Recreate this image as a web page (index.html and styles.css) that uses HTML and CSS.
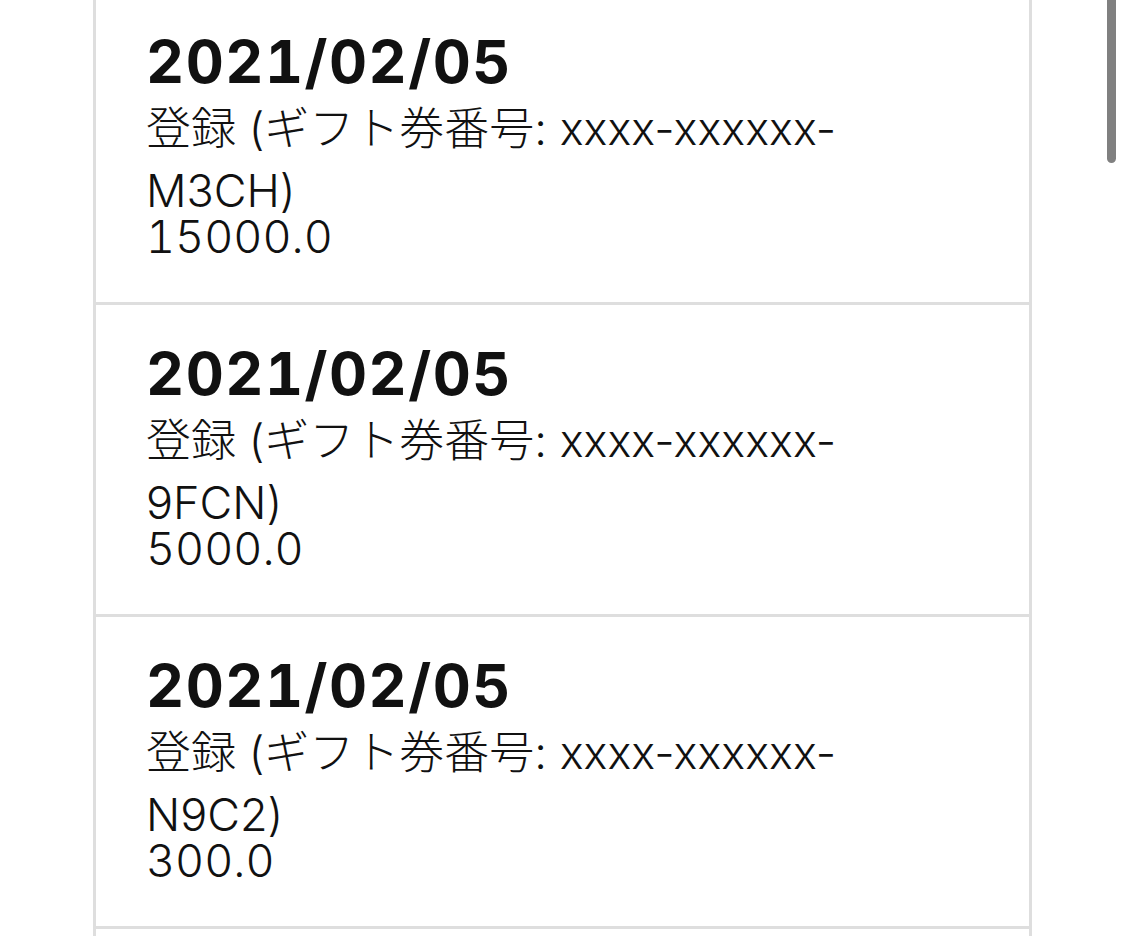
FILE: index.html
```html
<!DOCTYPE html>
<html lang="ja">

<head>
    <meta charset="UTF-8">
    <meta name="viewport" content="width=device-width, initial-scale=1.0">
    <title>ギフト券履歴</title>
    <link rel="stylesheet" href="styles.css">
</head>

<body>
    <div class="history">
        <div class="entry">
            <div class="date">2021/02/05</div>
            <div class="desc">登録 (ギフト券番号: xxxx-xxxxxx-<br>M3CH)</div>
            <div class="amount">15000.0</div>
        </div>
        <div class="entry">
            <div class="date">2021/02/05</div>
            <div class="desc">登録 (ギフト券番号: xxxx-xxxxxx-<br>9FCN)</div>
            <div class="amount">5000.0</div>
        </div>
        <div class="entry">
            <div class="date">2021/02/05</div>
            <div class="desc">登録 (ギフト券番号: xxxx-xxxxxx-<br>N9C2)</div>
            <div class="amount">300.0</div>
        </div>
        <!-- 次の行は画面外 -->
        <div class="entry entry-next"></div>
    </div>

    <!-- iOS風のスクロールインジケータ -->
    <div class="scroll-thumb"></div>
</body>

</html>
```

FILE: styles.css
```css
html,
body {
    margin: 0;
    height: 936px;
    overflow: hidden;
    background: #fff;
}

body {
    position: relative;
    font-family: Inter, "Noto Sans CJK JP", sans-serif;
    color: #111;
}

.history {
    margin: -10px 93px 0;
    border: 3px solid #dedede;
    border-bottom: none;
}

.entry {
    padding: 33px 50px 50px;
    border-bottom: 3px solid #dedede;
}

.entry-next {
    height: 240px;
}

.date {
    font-size: 59px;
    font-weight: 700;
    line-height: 72px;
    letter-spacing: 1.5px;
    font-variant-numeric: tabular-nums;
}

.desc {
    font-size: 45px;
    font-weight: 300;
    line-height: 62px;
    white-space: nowrap;
}

.amount {
    font-size: 45px;
    font-weight: 300;
    line-height: 30px;
    font-variant-numeric: tabular-nums;
}

.scroll-thumb {
    position: absolute;
    top: -20px;
    right: 9px;
    width: 9px;
    height: 183px;
    border-radius: 5px;
    background: #808080;
}
```
